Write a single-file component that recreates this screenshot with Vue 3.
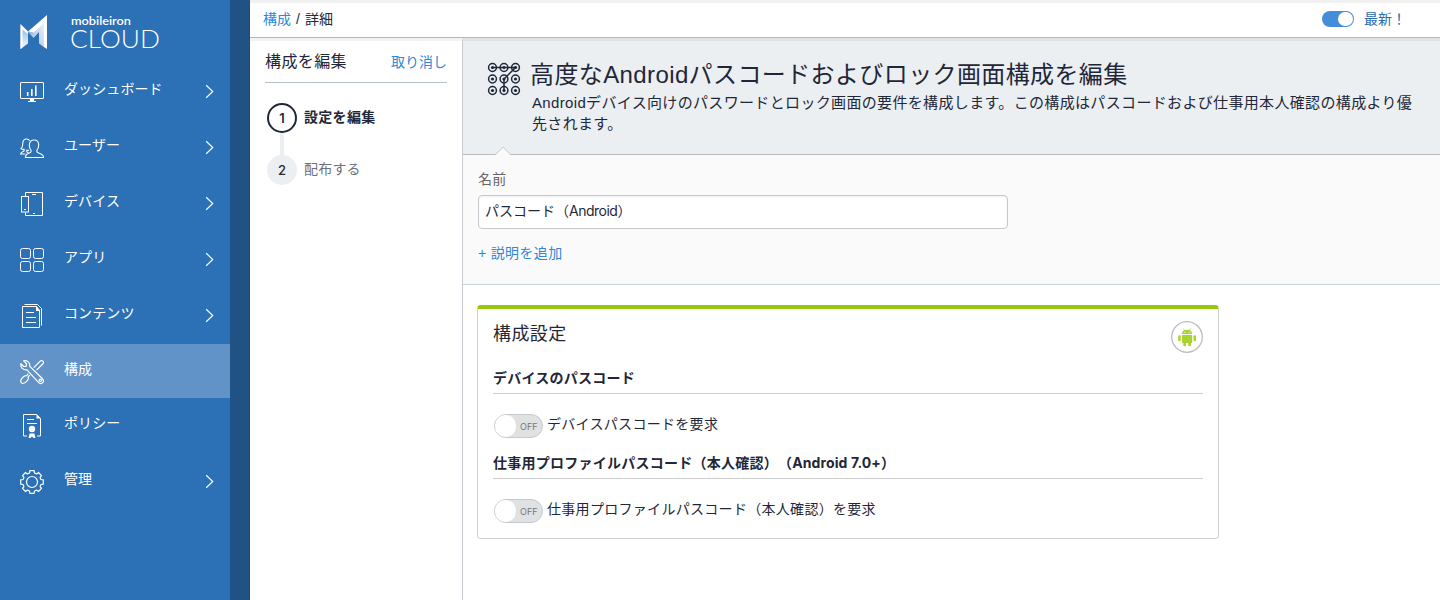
<script setup>
const nav = [
  { label: 'ダッシュボード', icon: 'dashboard', more: true },
  { label: 'ユーザー', icon: 'users', more: true },
  { label: 'デバイス', icon: 'devices', more: true },
  { label: 'アプリ', icon: 'apps', more: true },
  { label: 'コンテンツ', icon: 'content', more: true },
  { label: '構成', icon: 'config', active: true },
  { label: 'ポリシー', icon: 'policy' },
  { label: '管理', icon: 'admin', more: true }
]
const dots = [5.5, 17, 28.5]
const gear = (() => {
  const pts = []
  for (let i = 0; i < 8; i++) {
    const c = (i * Math.PI) / 4
    for (const [a, r] of [[-0.27, 9.3], [-0.19, 11.5], [0.19, 11.5], [0.27, 9.3]]) {
      pts.push(`${(12 + r * Math.cos(c + a)).toFixed(2)},${(12 + r * Math.sin(c + a)).toFixed(2)}`)
    }
  }
  return pts.join(' ')
})()
</script>

<template>
  <div class="app">
    <aside class="sidebar">
      <div class="logo">
        <svg width="170" height="64" viewBox="0 0 170 64">
          <defs>
            <linearGradient id="facetL" x1="0" y1="0" x2="0" y2="1">
              <stop offset="0" stop-color="#7ea9d5" />
              <stop offset="1" stop-color="#fff" />
            </linearGradient>
            <linearGradient id="facetR" x1="1" y1="0" x2="0" y2="1">
              <stop offset="0" stop-color="#f2f7fb" />
              <stop offset="1" stop-color="#9dbfdf" />
            </linearGradient>
            <linearGradient id="facetV" x1="0" y1="0" x2="0" y2="1">
              <stop offset="0" stop-color="#8db3da" />
              <stop offset="1" stop-color="#c5d9ed" />
            </linearGradient>
          </defs>
          <path d="M20.500 24 28 31.500V43.500L20.500 49Z" fill="url(#facetL)" />
          <path d="M20.500 24 28 31.500V34L22.500 29.500V47.500L20.500 49Z" fill="#fff" />
          <path d="M27.500 31.500H39L33.500 37.800Z" fill="url(#facetV)" />
          <path d="M33 33 44.500 20V47.500L39 43.500V32L33.500 37.800Z" fill="url(#facetR)" />
          <path d="M47 15V49L44 47V22.500L34 32.500 28 31.500Z" fill="#fff" />
          <text class="brand" x="71" y="25.200" textLength="60" lengthAdjust="spacingAndGlyphs">mobileiron</text>
          <text class="cloud" x="70" y="47.500" textLength="90" lengthAdjust="spacingAndGlyphs">CLOUD</text>
        </svg>
      </div>
      <nav>
        <a v-for="item in nav" :key="item.icon" class="item" :class="{ active: item.active }">
          <svg class="icon" width="24" height="26" viewBox="0 -1 24 26" fill="none" stroke="#fff">
            <g v-if="item.icon === 'dashboard'">
              <rect x=".5" y="2.5" width="23" height="16" rx=".5" />
              <path d="M7.700 16v-4M11.800 16v-7M15.800 16V5.500" stroke-width="1.600" />
              <path d="M10 19h4v2h2v1H8v-1h2z" fill="#fff" stroke="none" />
            </g>
            <g v-else-if="item.icon === 'users'" stroke-width="1.100">
              <path d="M5.500 21.500c0-3 1.200-3.500 3.300-4.200 2-.6 2.600-1.200 2.300-2.800-1.300-1.600-1.800-3-1.800-5.500 0-3.300 1.800-5 4.700-5s4.700 1.700 4.700 5c0 2.500-.6 3.900-1.900 5.500-.3 1.600.3 2.200 2.400 2.800 2.700.8 4.300 1.500 4.300 4.200z" />
              <path d="M9.800 4.800C8.900 3.500 8 3 6.700 3 4 3 2.700 5.200 2.700 8c0 2-.5 3.600-1.700 4.600.9.7 2 .9 3.100.8v1.500C3.400 16 .7 15.500.6 18h4.800M9 14.200c-.8.200-1.400.2-2.200 0v1.700l1.700 1.200" />
            </g>
            <g v-else-if="item.icon === 'devices'">
              <path d="M5.500 4v-3.500h17v23h-17v-3M12 2.500h4M13 21.500h2" />
              <rect x="1.500" y="4.500" width="7" height="15.500" />
              <path d="M4 17.500h2" />
            </g>
            <g v-else-if="item.icon === 'apps'">
              <rect x=".5" y=".5" width="10" height="10" rx="2" />
              <rect x="13.500" y=".5" width="10" height="10" rx="2" />
              <rect x=".5" y="13.500" width="10" height="10" rx="2" />
              <rect x="13.500" y="13.500" width="10" height="10" rx="2" />
            </g>
            <g v-else-if="item.icon === 'content'">
              <path d="M2.500 2.500h14l3 4v17h-17zM4.500.5h13l4 4v17M16.500 2.500v4h3" />
              <path d="M16 2l4 5h-4z" fill="#fff" stroke="none" />
              <path d="M6 8.500h8M6 13.500h10M6 18.500h10" />
            </g>
            <g v-else-if="item.icon === 'config'" stroke-width="1.200" stroke-linejoin="round">
              <path d="M3.600.9C7-.1 10.300 2.600 9.800 6.400L22.300 18.500C23.800 20 23.700 21.800 22.500 22.800 21.300 23.900 19.700 23.800 18.400 22.400L7 9.900C3.300 10.400.2 7.400.9 3.600L3.700 6.500 6.200 6.300 6.500 3.700Z" />
              <circle cx="20.300" cy="20.300" r="1.200" />
              <path d="M13.800 7.600 20 1.300C21 .3 22.200.5 22.900 1.200S23.700 3 22.700 4L16.600 10.200M9.800 15.200 8.200 17C8.600 18.300 8.200 19.700 7.100 20.900 5.300 22.900 3.200 24 1.500 22.900-.1 21.500.8 19.200 2.900 17.200 4.200 16 5.400 15.600 6.700 15.700L8.300 13.700" />
            </g>
            <g v-else-if="item.icon === 'policy'">
              <path d="M7 22H3.500v-21.500h13l4 4v17.500H17M7 5.500h7M7 9.500h10" />
              <path d="M16.500 0l4.500 4.500h-4.500z" fill="#fff" stroke="none" />
              <circle cx="12" cy="15" r="3.200" fill="#fff" stroke="none" />
              <path d="M9.500 19.500h5l1 4.500H13.500L12 22.500 10.500 24H8.500z" fill="#fff" stroke="none" />
            </g>
            <g v-else stroke-width="1.200">
              <polygon :points="gear" stroke-linejoin="round" />
              <circle cx="12" cy="12" r="5.500" />
            </g>
          </svg>
          <span class="label">{{ item.label }}</span>
          <svg v-if="item.more" class="chev" width="9" height="15" viewBox="0 0 9 15" fill="none" stroke="#fff" stroke-width="1.200">
            <path d="M1.200 1.200 7.700 7.500 1.200 13.800" />
          </svg>
        </a>
      </nav>
    </aside>
    <div class="gutter"></div>

    <div class="page">
      <header class="topbar">
        <div class="crumbs"><a>構成</a><span>/</span><span>詳細</span></div>
        <div class="latest"><i class="switch"></i><span>最新！</span></div>
      </header>
      <div class="body">
        <section class="steps">
          <div class="steps-head"><h2>構成を編集</h2><a>取り消し</a></div>
          <div class="step current"><b>1</b><span>設定を編集</span></div>
          <div class="link"></div>
          <div class="step"><b>2</b><span>配布する</span></div>
        </section>
        <main>
          <div class="hero">
            <svg class="pattern" width="34" height="34" viewBox="0 0 34 34" fill="none" stroke="#1f2738" stroke-width="1.500">
              <template v-for="y in dots" :key="y">
                <g v-for="x in dots" :key="x">
                  <circle :cx="x" :cy="y" r="3.900" />
                  <circle :cx="x" :cy="y" r="1.600" fill="#1f2738" stroke="none" />
                </g>
              </template>
              <path d="M5.500 5.500h23L17 17v11.500" stroke-width="1.500" />
            </svg>
            <div class="hero-text">
              <h1>高度なAndroidパスコードおよびロック画面構成を編集</h1>
              <p>Androidデバイス向けのパスワードとロック画面の要件を構成します。この構成はパスコードおよび仕事用本人確認の構成より優<br>先されます。</p>
            </div>
            <svg class="notch" width="18" height="9" viewBox="0 0 18 9">
              <path d="M1 9 9 1.200 17 9" fill="#fafafa" stroke="#c4c9ce" stroke-width="1" />
            </svg>
          </div>
          <div class="name">
            <label>名前</label>
            <div class="field"><span>パスコード（</span><em>Android</em><span>）</span></div>
            <a>+ 説明を追加</a>
          </div>
          <div class="card">
            <div class="card-head">
              <h3>構成設定</h3>
              <svg width="32" height="32" viewBox="0 0 32 32">
                <circle cx="16" cy="16" r="15.300" fill="#fff" stroke="#b7bec5" stroke-width="1.300" />
                <g fill="#a9d42f">
                  <path d="M11 13c0-2.700 1.500-4.200 5-4.200s5 1.500 5 4.200z" />
                  <path d="M11 14h10.200v7.200c0 .5-.3.800-.8.800h-8.600c-.5 0-.8-.3-.8-.8z" />
                  <rect x="7.200" y="14.200" width="2.500" height="6" rx="1" />
                  <rect x="22.500" y="14.200" width="2.500" height="6" rx="1" />
                  <rect x="12.300" y="21" width="2.700" height="4.300" rx="1" />
                  <rect x="17.200" y="21" width="2.700" height="4.300" rx="1" />
                </g>
                <path d="M12.500 7.500l1.200 2M19.500 7.500l-1.200 2" stroke="#a9d42f" stroke-width=".7" />
                <circle cx="14" cy="11.300" r=".6" fill="#fff" /><circle cx="18.200" cy="11.300" r=".6" fill="#fff" />
              </svg>
            </div>
            <h4>デバイスのパスコード</h4>
            <div class="option"><span class="toggle"><i></i>OFF</span><span>デバイスパスコードを要求</span></div>
            <h4>仕事用プロファイルパスコード（本人確認）（<em>Android 7.0+</em>）</h4>
            <div class="option"><span class="toggle"><i></i>OFF</span><span>仕事用プロファイルパスコード（本人確認）を要求</span></div>
          </div>
        </main>
      </div>
    </div>
  </div>
</template>

<style>
body { margin: 0; background: #fff; }
</style>
<style scoped>
* { box-sizing: border-box; }
.app { display: flex; width: 1440px; height: 600px; overflow: hidden; color: #1f2738; font: 14px/20px "Liberation Sans", "Noto Sans CJK JP", sans-serif; white-space: nowrap; text-spacing-trim: space-all; }
h1, h2, h3, h4, p { margin: 0; font-weight: 400; }
a { color: #2e87d9; }
em { font-style: normal; font-family: Inter, sans-serif; }
.sidebar { width: 230px; background: #2c70b6; color: #fff; }
.gutter { width: 20px; background: #215286; border-right: 1px solid #1b4a7c; }
.logo { height: 64px; }
.logo svg { display: block; }
.brand { font: 600 12px Lato, sans-serif; fill: #fff; }
.cloud { font: 300 25px Lato, sans-serif; fill: #fff; }
.item { display: flex; align-items: center; height: 56px; padding: 0 16px 0 20px; color: #fff; }
.item.active { height: 54px; background: #6193c9; }
.icon { margin-top: -1px; }
.label { flex: 1; margin: -7px 0 0 20px; letter-spacing: .1px; }
.chev { margin-top: -1px; }
.active .icon { margin-top: 1px; }
.active .label { margin-top: -5px; }
.page { flex: 1; display: flex; flex-direction: column; min-width: 0; }
.topbar { display: flex; justify-content: space-between; align-items: center; height: 38px; border-top: 3px solid #f1f1f1; border-bottom: 1px solid #b3b8bd; padding: 0 34px 2px 13px; }
.crumbs { display: flex; gap: 5px; margin-top: -1px; }
.latest { display: flex; align-items: center; gap: 10px; color: #2a6cb0; }
.latest span { margin-top: -1px; }
.switch { width: 32px; height: 16px; border-radius: 8px; background: #448dd9; padding: 1px; display: flex; justify-content: flex-end; }
.switch::after { content: ""; width: 15px; height: 14px; border-radius: 7px; background: #fff; }
.body { flex: 1; display: flex; }
.steps { width: 213px; border-right: 1px solid #c6cacf; border-top: 3px solid #f3f3f3; padding: 0 15px; }
.steps-head { display: flex; justify-content: space-between; align-items: center; height: 42px; border-bottom: 1px solid #b5bfc7; margin-bottom: 20px; }
.steps-head h2 { font-size: 16px; letter-spacing: .4px; }
.step { display: flex; align-items: center; gap: 7px; margin-left: 2px; height: 30px; color: #6c717b; letter-spacing: .2px; }
.step span { margin-top: -2px; }
.step b { width: 30px; height: 30px; border-radius: 50%; background: #ebeff2; color: #1f2738; font: 500 13px/30px Inter, sans-serif; letter-spacing: 0; text-align: center; }
.step.current { color: #1f2738; font-weight: 700; letter-spacing: .3px; }
.step.current b { border: 2px solid #1f2738; background: #fff; line-height: 26px; font-weight: 600; letter-spacing: 0; }
.link { width: 4px; height: 22px; margin-left: 15px; background: #ebeff2; }
main { flex: 1; min-width: 0; }
.hero { position: relative; display: flex; height: 117px; background: #ebeff2; border-top: 3px solid #dfe3e6; border-bottom: 1px solid #b9bdc1; }
.pattern { margin: 21px 0 0 24px; }
.hero-text { margin: 17px 0 0 9px; }
h1 { font-size: 24px; line-height: 34px; letter-spacing: .39px; }
.hero p { margin-left: 2px; font-size: 15px; line-height: 21px; letter-spacing: .34px; }
.notch { position: absolute; left: 31px; bottom: -1px; }
.name { height: 130px; padding: 14px 15px 0; background: #fafafa; border-bottom: 1px solid #ccd5da; display: flex; flex-direction: column; align-items: flex-start; }
.name label { color: #666; letter-spacing: .2px; }
.name a { letter-spacing: .35px; }
.field { display: flex; align-items: center; width: 530px; height: 34px; margin: 6px 0 14px; padding: 0 6px 2px; background: #fff; border: 1px solid #c5c8cc; border-radius: 4px; box-shadow: inset 0 1px 2px #0000000f; }
.field em { letter-spacing: -.5px; }
.card { width: 742px; height: 234px; margin: 20px 0 0 14px; padding: 0 15px; border: 1px solid #cfd2d5; border-top: 4px solid #95c80b; border-radius: 4px; }
.card-head { display: flex; justify-content: space-between; align-items: flex-start; height: 58px; padding-top: 12px; }
h3 { margin-top: 1px; font-size: 18px; line-height: 24px; letter-spacing: .4px; }
h4 { height: 27px; padding-top: 1px; border-bottom: 1px solid #ccc; font-weight: 700; letter-spacing: .25px; }
h4 em { letter-spacing: .1px; }
.option { display: flex; align-items: flex-start; gap: 4px; height: 58px; padding: 20px 0 0 1px; letter-spacing: .3px; }
.toggle { display: flex; align-items: center; gap: 4px; width: 49px; height: 24px; border: 1px solid #c6cbd0; border-radius: 12px; background: #dfe1e3; color: #777; font: 9px Inter, sans-serif; letter-spacing: 0; }
.toggle i { width: 21px; height: 22px; border-radius: 11px; background: #fff; }
</style>
